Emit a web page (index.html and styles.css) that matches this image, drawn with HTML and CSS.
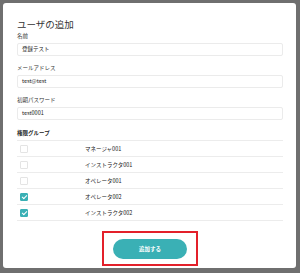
FILE: index.html
```html
<!DOCTYPE html>
<html lang="ja">
<head>
  <meta charset="UTF-8">
  <title>ユーザの追加</title>
  <link rel="stylesheet" href="styles.css">
</head>
<body>
  <div class="modal">
    <h2 class="modal-title">ユーザの追加</h2>

    <div class="form-group">
      <label>名前</label>
      <div class="input">登録テスト</div>
    </div>
    <div class="form-group">
      <label>メールアドレス</label>
      <div class="input">test@test</div>
    </div>
    <div class="form-group">
      <label>初期パスワード</label>
      <div class="input">test0001</div>
    </div>

    <div class="group-head">権限グループ</div>
    <div class="group-row"><span class="check"></span><span class="name">マネージャ001</span></div>
    <div class="group-row"><span class="check"></span><span class="name">インストラクタ001</span></div>
    <div class="group-row"><span class="check"></span><span class="name">オペレータ001</span></div>
    <div class="group-row"><span class="check on"></span><span class="name">オペレータ002</span></div>
    <div class="group-row"><span class="check on"></span><span class="name">インストラクタ002</span></div>

    <div class="actions">
      <div class="highlight">
        <button class="btn-add">追加する</button>
      </div>
    </div>
  </div>
</body>
</html>
```

FILE: styles.css
```css
body {
  margin: 0;
  height: 273px;
  overflow: hidden;
  background: #6f6f6f;
  font-family: "Noto Sans CJK JP", "Noto Sans", sans-serif;
  color: #333;
}

.modal {
  margin: 3px 4px 0 3px;
  height: 265px;
  box-sizing: border-box;
  background: #fff;
  border-radius: 3px;
  padding: 14px 13px 0 14px;
}

.modal-title {
  margin: 0 0 1px;
  font-size: 9.5px;
  line-height: 14px;
  font-weight: 400;
  color: #333;
}

.form-group {
  margin-bottom: 8px;
}
.form-group label {
  display: block;
  font-size: 5.5px;
  line-height: 8px;
  color: #333;
}
.input {
  margin-top: 3px;
  height: 13px;
  box-sizing: border-box;
  border: 1px solid #ebebeb;
  border-radius: 2px;
  padding-left: 4px;
  font-size: 5.5px;
  line-height: 11px;
  color: #222;
}

.group-head {
  margin-top: 8px;
  padding-bottom: 2px;
  font-size: 5.5px;
  line-height: 10px;
  font-weight: 700;
  color: #222;
  border-bottom: 1px solid #ececec;
}

.group-row {
  display: flex;
  align-items: center;
  height: 15px;
  border-bottom: 1px solid #ececec;
}
.check {
  width: 8px;
  height: 8px;
  box-sizing: border-box;
  margin-left: 3px;
  border: 1px solid #e4e4e4;
  border-radius: 1px;
  position: relative;
}
.check.on {
  background: #3ab0b5;
  border-color: #3ab0b5;
}
.check.on::after {
  content: "";
  position: absolute;
  left: 2px;
  top: 0;
  width: 2px;
  height: 4px;
  border: solid #fff;
  border-width: 0 1px 1px 0;
  transform: rotate(45deg);
}
.name {
  margin-left: 57px;
  font-size: 5.5px;
  color: #222;
}

.actions {
  display: flex;
  justify-content: center;
  margin-top: 10px;
}
.highlight {
  border: 2px solid #e3202a;
  padding: 6px 9px 5px;
}
.btn-add {
  display: block;
  width: 74px;
  height: 20px;
  border: none;
  border-radius: 10px;
  background: #3ab0b5;
  color: #fff;
  font-family: inherit;
  font-size: 5.5px;
  font-weight: 700;
  padding: 0;
}
```
